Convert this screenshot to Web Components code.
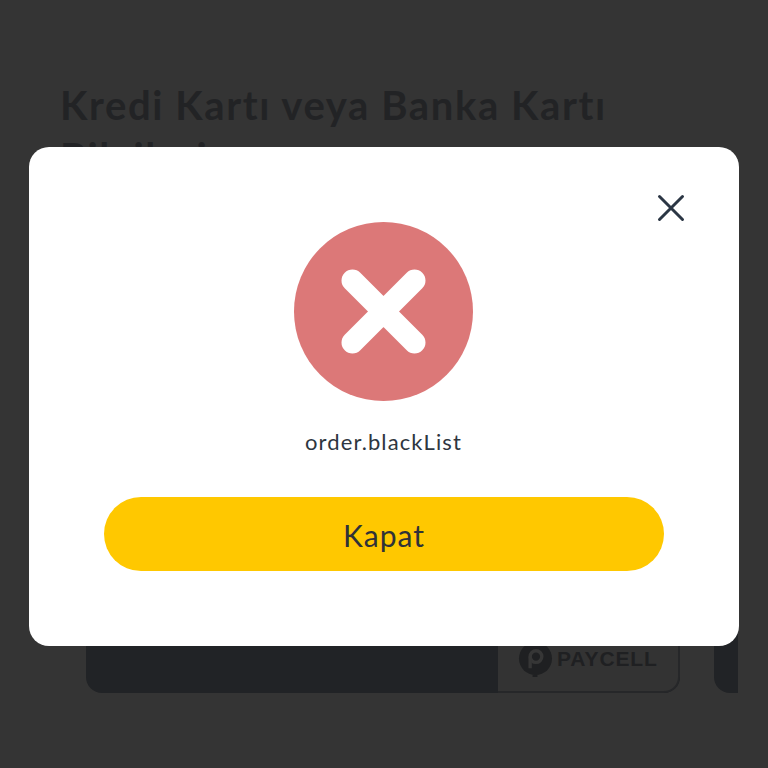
<!DOCTYPE html>
<html><head><meta charset="utf-8">
<style>html,body{margin:0;padding:0;background:#343434}body{width:768px;height:768px;overflow:hidden;position:relative;font-family:Lato,"Noto Sans",sans-serif}</style>
</head><body>
<checkout-page>
  <span slot="title">Kredi Kartı veya Banka Kartı Bilgileri</span>
</checkout-page>
<alert-modal message="order.blackList" action="Kapat"></alert-modal>
<script>
class CheckoutPage extends HTMLElement{constructor(){super();this.attachShadow({mode:'open'}).innerHTML=`
<style>
:host{display:block;height:768px;box-sizing:border-box;padding:79px 30px 0 60px;background:#343434;overflow:hidden}
h1{margin:0;width:600px;font:700 40px/52px Lato,sans-serif;color:#222325;letter-spacing:1.6px;height:321px}
.rail{display:flex;gap:34px;margin-left:26px;overflow:hidden;height:293px}
pay-card{flex:none}
.next{flex:none;width:80px;height:293px;background:#212326;border-radius:16px 0 0 16px}
</style>
<h1><slot name="title"></slot></h1>
<div class="rail"><pay-card></pay-card><div class="next"></div></div>`}}
class PayCard extends HTMLElement{constructor(){super();this.attachShadow({mode:'open'}).innerHTML=`
<style>
:host{display:flex;width:594px;height:293px;box-sizing:border-box;background:#212326;border-radius:16px;overflow:hidden}
.fill{flex:1}
.logo{width:182px;box-sizing:border-box;border:2px solid #262729;border-left:0;border-radius:0 0 16px 0;background:#333;display:flex;align-items:flex-end;gap:4px;padding:0 0 14px 20px}
svg{width:35px;height:35px;flex:none}
b{font:900 21px/30px "Liberation Sans",sans-serif;color:#1f2022;letter-spacing:.9px;margin-bottom:3px}
</style>
<div class="fill"></div>
<div class="logo"><svg viewBox="0 0 36 36"><circle cx="18" cy="17" r="17" fill="#1f2022"/><path d="M15 34h5v2h-5z" fill="#1f2022"/><circle cx="18.500" cy="15" r="6" fill="none" stroke="#363636" stroke-width="3.500"/><path d="M12.500 15v12" stroke="#363636" stroke-width="3.500" fill="none"/></svg><b>PAYCELL</b></div>`}}
class AlertModal extends HTMLElement{constructor(){super();const m=this.getAttribute('message'),a=this.getAttribute('action');this.attachShadow({mode:'open'}).innerHTML=`
<style>
:host{position:absolute;left:29px;top:147px;width:710px;height:499px;box-sizing:border-box;background:#fff;border-radius:20px;display:flex;flex-direction:column;align-items:center;padding-top:75px;color:#2e3640}
.close{position:absolute;right:54px;top:47px;width:28px;height:28px;display:block}
.icon{width:179px;height:179px;display:block;flex:none;margin-left:-1px}
p{margin:27px 0 0 -1px;font:400 22px/28px Lato,sans-serif;letter-spacing:1.1px;white-space:nowrap}
button{margin-top:41px;width:560px;height:74px;border:0;border-radius:37px;background:#ffc800;color:#2f3238;font:400 30px/76px Lato,sans-serif;letter-spacing:1px;padding:0}
</style>
<svg class="close" viewBox="0 0 28 28"><path d="M2.500 2.500 25.500 25.500M25.500 2.500 2.500 25.500" stroke="#2b3644" stroke-width="3" stroke-linecap="round" fill="none"/></svg>
<svg class="icon" viewBox="0 0 179 179"><circle cx="89.500" cy="89.500" r="89.500" fill="#dc7878"/><path d="M58.500 58.500 120.500 120.500M120.500 58.500 58.500 120.500" stroke="#fff" stroke-width="22" stroke-linecap="round" fill="none"/></svg>
<p>${m}</p>
<button>${a}</button>`}}
customElements.define('pay-card',PayCard);
customElements.define('checkout-page',CheckoutPage);
customElements.define('alert-modal',AlertModal);
</script>
</body></html>
